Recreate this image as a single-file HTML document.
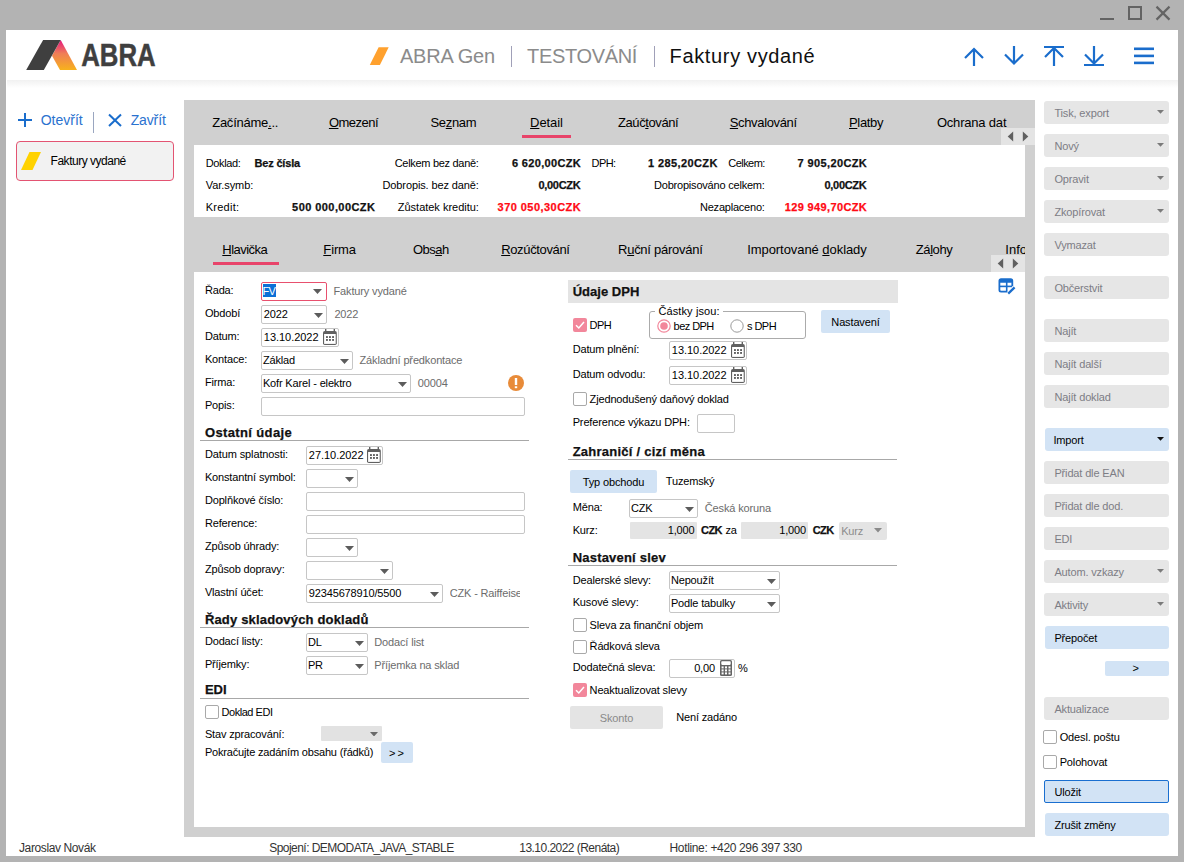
<!DOCTYPE html>
<html><head><meta charset="utf-8"><title>ABRA Gen - Faktury vydané</title>
<style>
html,body{margin:0;padding:0;}
body{width:1184px;height:862px;position:relative;overflow:hidden;background:#b3b3b3;font-family:"Liberation Sans",sans-serif;}
.b{position:absolute;box-sizing:border-box;}
.t{position:absolute;white-space:nowrap;}
u{text-decoration:underline;text-underline-offset:1px;}
</style></head><body>
<div class="b" style="left:6px;top:30px;width:1172px;height:826px;background:#ffffff;"></div>
<svg class="b" style="left:1096px;top:2px" width="80" height="22" viewBox="0 0 80 22"><g stroke="#636363" stroke-width="2" fill="none"><line x1="4" y1="17" x2="18" y2="17"/><rect x="33" y="5" width="12" height="12"/><line x1="60.5" y1="4.6" x2="73.5" y2="17.6" stroke-width="2.2"/><line x1="73.5" y1="4.6" x2="60.5" y2="17.6" stroke-width="2.2"/></g></svg>
<div class="b" style="left:7px;top:80px;width:1171px;height:8px;background:linear-gradient(#f1f1f1,#ffffff);"></div>
<svg class="b" style="left:20px;top:36px" width="140" height="40" viewBox="0 0 140 40"><defs><linearGradient id="lg" x1="0" y1="0" x2="0" y2="1"><stop offset="0" stop-color="#e6177f"/><stop offset="0.45" stop-color="#ef7d57"/><stop offset="1" stop-color="#f7b21c"/></linearGradient></defs><polygon points="40.7,4 57,34 40,34 32,19.7" fill="url(#lg)"/><polygon points="6.2,34 23.1,4 40.7,4 23.8,34" fill="#3f3f3f"/><text x="61.2" y="29.8" font-family="Liberation Sans" font-weight="bold" font-size="31.5" fill="#3f3f3f" stroke="#3f3f3f" stroke-width="0.5" textLength="74.5" lengthAdjust="spacingAndGlyphs">ABRA</text></svg>
<svg class="b" style="left:368px;top:46px" width="22" height="20" viewBox="0 0 22 20"><polygon points="1.8,19 10.6,1.2 20.7,1.2 11.9,19" fill="#ffa12e"/></svg>
<div class="t" style="left:400.00px;top:46.00px;font-size:20px;line-height:20px;color:#8b8b8b;letter-spacing:-0.243px;">ABRA Gen</div>
<div class="b" style="left:511px;top:46px;width:1px;height:21px;background:#a0a0b8;"></div>
<div class="t" style="left:527.00px;top:46.00px;font-size:20px;line-height:20px;color:#8b8b8b;letter-spacing:-0.329px;">TESTOVÁNÍ</div>
<div class="b" style="left:654px;top:46px;width:1px;height:21px;background:#a0a0b8;"></div>
<div class="t" style="left:669.60px;top:46.00px;font-size:20px;line-height:20px;color:#101010;letter-spacing:0.646px;">Faktury vydané</div>
<svg class="b" style="left:960px;top:42px" width="200" height="28" viewBox="0 0 200 28"><g stroke="#1a6dcc" stroke-width="2.2" fill="none" stroke-linecap="butt"><path d="M14,24 V7.5 M5,16 L14,7 L23,16"/><path d="M54,4 V21.5 M45,12.5 L54,21.5 L63,12.5"/><path d="M84,5 H104 M94,24 V6.5 M85,15 L94,6 L103,15"/><path d="M124,23 H144 M134,4 V21.5 M125,12.5 L134,21.5 L143,12.5"/></g><g fill="#1a6dcc"><rect x="174" y="5.5" width="20" height="2.6"/><rect x="174" y="12.6" width="20" height="2.6"/><rect x="174" y="19.6" width="20" height="2.6"/></g></svg>
<svg class="b" style="left:16px;top:111px" width="18" height="18" viewBox="0 0 18 18"><g stroke="#1a6dcc" stroke-width="2"><line x1="9" y1="2" x2="9" y2="16"/><line x1="2" y1="9" x2="16" y2="9"/></g></svg>
<div class="t" style="left:40.70px;top:113.00px;font-size:14px;line-height:14px;color:#2a72cf;">Otevřít</div>
<div class="b" style="left:93px;top:112px;width:1px;height:21px;background:#9aa6c0;"></div>
<svg class="b" style="left:106px;top:112px" width="18" height="18" viewBox="0 0 18 18"><g stroke="#1a6dcc" stroke-width="2"><line x1="3" y1="2.5" x2="15" y2="14"/><line x1="15" y1="2.5" x2="3" y2="14"/></g></svg>
<div class="t" style="left:130.70px;top:113.00px;font-size:14px;line-height:14px;color:#2a72cf;letter-spacing:-0.138px;">Zavřít</div>
<div class="b" style="left:16px;top:141px;width:158px;height:40px;background:#f2f2f2;border:1px solid #e35472;border-radius:4px;"></div>
<svg class="b" style="left:20px;top:151px" width="22" height="20" viewBox="0 0 22 20"><polygon points="1,19 9.5,1 21,1 12.5,19" fill="#ffd200"/></svg>
<div class="t" style="left:50.60px;top:155.00px;font-size:12px;line-height:12px;color:#000000;letter-spacing:-0.489px;">Faktury vydané</div>
<div class="b" style="left:184px;top:100px;width:851px;height:737px;background:#d0d0d0;"></div>
<div class="b" style="left:194px;top:145px;width:831px;height:72px;background:#ffffff;"></div>
<div class="b" style="left:194px;top:272px;width:831px;height:555px;background:#ffffff;"></div>
<div class="t" style="left:212.20px;top:116.00px;font-size:13px;line-height:13px;color:#000000;letter-spacing:-0.243px;">Začínáme<u>.</u>..</div>
<div class="t" style="left:328.90px;top:116.00px;font-size:13px;line-height:13px;color:#000000;letter-spacing:-0.522px;"><u>O</u>mezení</div>
<div class="t" style="left:430.50px;top:116.00px;font-size:13px;line-height:13px;color:#000000;letter-spacing:-0.332px;">Se<u>z</u>nam</div>
<div class="t" style="left:530.10px;top:116.00px;font-size:13px;line-height:13px;color:#000000;letter-spacing:-0.090px;"><u>D</u>etail</div>
<div class="b" style="left:522px;top:135px;width:49px;height:3px;background:#e8446a;"></div>
<div class="t" style="left:618.00px;top:116.00px;font-size:13px;line-height:13px;color:#000000;letter-spacing:-0.411px;">Zaúč<u>t</u>ování</div>
<div class="t" style="left:729.80px;top:116.00px;font-size:13px;line-height:13px;color:#000000;letter-spacing:-0.361px;"><u>S</u>chvalování</div>
<div class="t" style="left:849.00px;top:116.00px;font-size:13px;line-height:13px;color:#000000;letter-spacing:-0.326px;"><u>P</u>latby</div>
<div class="t" style="left:936.90px;top:116.00px;font-size:13px;line-height:13px;color:#000000;letter-spacing:-0.193px;">Ochrana dat</div>
<div class="b" style="left:1001px;top:128px;width:34px;height:17px;background:#e4e4e4;"></div>
<svg class="b" style="left:1001px;top:128px" width="34" height="17" viewBox="0 0 34 17"><g fill="#606060"><polygon points="6.7,8.5 12.2,3.5 12.2,13.5"/><polygon points="27.3,8.5 21.8,3.5 21.8,13.5"/></g></svg>
<div class="t" style="left:205.70px;top:158.00px;font-size:11px;line-height:11px;color:#000000;letter-spacing:-0.373px;">Doklad:</div>
<div class="t" style="left:254.60px;top:158.00px;font-size:11px;line-height:11px;color:#111;font-weight:bold;-webkit-text-stroke:0.25px #111;letter-spacing:-0.196px;">Bez čísla</div>
<div class="t" style="left:394.70px;top:158.00px;font-size:11px;line-height:11px;color:#000000;letter-spacing:-0.300px;">Celkem bez daně:</div>
<div class="t" style="left:512.00px;top:158.00px;font-size:11px;line-height:11px;color:#111;font-weight:bold;-webkit-text-stroke:0.25px #111;letter-spacing:0.322px;">6 620,00CZK</div>
<div class="t" style="left:591.50px;top:158.00px;font-size:11px;line-height:11px;color:#000000;letter-spacing:-0.550px;">DPH:</div>
<div class="t" style="left:647.90px;top:158.00px;font-size:11px;line-height:11px;color:#111;font-weight:bold;-webkit-text-stroke:0.25px #111;letter-spacing:0.412px;">1 285,20CZK</div>
<div class="t" style="left:728.30px;top:158.00px;font-size:11px;line-height:11px;color:#000000;letter-spacing:-0.550px;">Celkem:</div>
<div class="t" style="left:797.60px;top:158.00px;font-size:11px;line-height:11px;color:#111;font-weight:bold;-webkit-text-stroke:0.25px #111;letter-spacing:0.372px;">7 905,20CZK</div>
<div class="t" style="left:205.70px;top:180.00px;font-size:11px;line-height:11px;color:#000000;letter-spacing:-0.054px;">Var.symb:</div>
<div class="t" style="left:382.50px;top:180.00px;font-size:11px;line-height:11px;color:#000000;letter-spacing:-0.116px;">Dobropis. bez daně:</div>
<div class="t" style="left:538.43px;top:180.00px;font-size:11px;line-height:11px;color:#111;font-weight:bold;-webkit-text-stroke:0.25px #111;letter-spacing:-0.300px;">0,00CZK</div>
<div class="t" style="left:654.00px;top:180.00px;font-size:11px;line-height:11px;color:#000000;letter-spacing:-0.205px;">Dobropisováno celkem:</div>
<div class="t" style="left:824.53px;top:180.00px;font-size:11px;line-height:11px;color:#111;font-weight:bold;-webkit-text-stroke:0.25px #111;letter-spacing:-0.300px;">0,00CZK</div>
<div class="t" style="left:205.70px;top:202.00px;font-size:11px;line-height:11px;color:#000000;letter-spacing:0.261px;">Kredit:</div>
<div class="t" style="left:292.10px;top:202.00px;font-size:11px;line-height:11px;color:#111;font-weight:bold;-webkit-text-stroke:0.25px #111;letter-spacing:0.432px;">500 000,00CZK</div>
<div class="t" style="left:397.80px;top:202.00px;font-size:11px;line-height:11px;color:#000000;letter-spacing:-0.016px;">Zůstatek kreditu:</div>
<div class="t" style="left:497.60px;top:202.00px;font-size:11px;line-height:11px;color:#ff0a14;font-weight:bold;-webkit-text-stroke:0.25px #ff0a14;letter-spacing:0.449px;">370 050,30CZK</div>
<div class="t" style="left:700.00px;top:202.00px;font-size:11px;line-height:11px;color:#000000;letter-spacing:-0.219px;">Nezaplaceno:</div>
<div class="t" style="left:784.70px;top:202.00px;font-size:11px;line-height:11px;color:#ff0a14;font-weight:bold;-webkit-text-stroke:0.25px #ff0a14;letter-spacing:0.365px;">129 949,70CZK</div>
<div class="t" style="left:222.30px;top:243.00px;font-size:13px;line-height:13px;color:#000000;letter-spacing:-0.514px;"><u>H</u>lavička</div>
<div class="b" style="left:213px;top:262px;width:66px;height:3px;background:#e8446a;"></div>
<div class="t" style="left:323.30px;top:243.00px;font-size:13px;line-height:13px;color:#000000;letter-spacing:-0.122px;"><u>F</u>irma</div>
<div class="t" style="left:413.00px;top:243.00px;font-size:13px;line-height:13px;color:#000000;letter-spacing:-0.550px;">Obs<u>a</u>h</div>
<div class="t" style="left:501.20px;top:243.00px;font-size:13px;line-height:13px;color:#000000;letter-spacing:-0.355px;"><u>R</u>ozúčtování</div>
<div class="t" style="left:618.00px;top:243.00px;font-size:13px;line-height:13px;color:#000000;letter-spacing:-0.258px;">R<u>u</u>ční párování</div>
<div class="t" style="left:747.20px;top:243.00px;font-size:13px;line-height:13px;color:#000000;letter-spacing:-0.060px;">Importované <u>d</u>oklady</div>
<div class="t" style="left:915.80px;top:243.00px;font-size:13px;line-height:13px;color:#000000;letter-spacing:-0.424px;">Zá<u>l</u>ohy</div>
<div class="t" style="left:1005.30px;top:243.00px;font-size:13px;line-height:13px;color:#000000;width:19.70px;overflow:hidden;">Info</div>
<div class="b" style="left:991px;top:255px;width:34px;height:17px;background:#e4e4e4;"></div>
<svg class="b" style="left:991px;top:255px" width="34" height="17" viewBox="0 0 34 17"><g fill="#606060"><polygon points="6.7,8.5 12.2,3.5 12.2,13.5"/><polygon points="27.3,8.5 21.8,3.5 21.8,13.5"/></g></svg>
<div class="t" style="left:204.90px;top:285.00px;font-size:11px;line-height:11px;color:#000000;letter-spacing:-0.150px;">Řada:</div>
<div class="b" style="left:261px;top:282px;width:66px;height:19px;background:#fff;border:1px solid #e8506e;border-radius:2px;"></div>
<div class="b" style="left:263px;top:284px;width:13px;height:13px;background:#0c6fd6;"></div>
<div class="t" style="left:262.60px;top:286.00px;font-size:11px;line-height:11px;color:#ffffff;letter-spacing:-0.900px;">FV</div>
<svg class="b" style="left:313.3px;top:289.3px" width="9" height="5" viewBox="0 0 9 5"><polygon points="0,0 9,0 4.5,5" fill="#5c5c5c"/></svg>
<div class="t" style="left:333.50px;top:286.00px;font-size:11px;line-height:11px;color:#6c6c6c;letter-spacing:-0.150px;">Faktury vydané</div>
<div class="t" style="left:204.90px;top:308.00px;font-size:11px;line-height:11px;color:#000000;letter-spacing:-0.150px;">Období</div>
<div class="b" style="left:261px;top:305px;width:66px;height:19px;background:#fff;border:1px solid #c6c6c6;border-radius:2px;"></div>
<div class="t" style="left:263.80px;top:309.00px;font-size:11px;line-height:11px;color:#000000;letter-spacing:-0.150px;">2022</div>
<svg class="b" style="left:313.5px;top:312.6px" width="9" height="5" viewBox="0 0 9 5"><polygon points="0,0 9,0 4.5,5" fill="#5c5c5c"/></svg>
<div class="t" style="left:334.40px;top:309.00px;font-size:11px;line-height:11px;color:#6c6c6c;letter-spacing:-0.150px;">2022</div>
<div class="t" style="left:204.90px;top:331.00px;font-size:11px;line-height:11px;color:#000000;letter-spacing:-0.150px;">Datum:</div>
<div class="b" style="left:261px;top:328px;width:78px;height:19px;background:#fff;border:1px solid #c6c6c6;border-radius:2px;"></div>
<div class="t" style="left:263.80px;top:332.00px;font-size:11px;line-height:11px;color:#000000;letter-spacing:-0.037px;">13.10.2022</div>
<svg class="b" style="left:322.8px;top:329px" width="14" height="16" viewBox="0 0 14 16"><g fill="#606060"><rect x="0" y="2" width="13.8" height="14" rx="1.8"/><rect x="2" y="0" width="1.4" height="3"/><rect x="10.6" y="0" width="1.4" height="3"/></g><rect x="1.1" y="5" width="11.6" height="9.9" fill="#fff"/><g fill="#606060"><rect x="3" y="7.1" width="1.9" height="1.9"/><rect x="6" y="7.1" width="1.9" height="1.9"/><rect x="9.1" y="7.1" width="1.9" height="1.9"/><rect x="3" y="10" width="1.9" height="1.9"/><rect x="6" y="10" width="1.9" height="1.9"/><rect x="9.1" y="10" width="1.9" height="1.9"/></g></svg>
<div class="t" style="left:204.90px;top:354.00px;font-size:11px;line-height:11px;color:#000000;letter-spacing:-0.150px;">Kontace:</div>
<div class="b" style="left:261px;top:351px;width:92px;height:19px;background:#fff;border:1px solid #c6c6c6;border-radius:2px;"></div>
<div class="t" style="left:262.90px;top:355.00px;font-size:11px;line-height:11px;color:#000000;letter-spacing:-0.150px;">Základ</div>
<svg class="b" style="left:339.5px;top:358.6px" width="9" height="5" viewBox="0 0 9 5"><polygon points="0,0 9,0 4.5,5" fill="#5c5c5c"/></svg>
<div class="t" style="left:359.50px;top:355.00px;font-size:11px;line-height:11px;color:#6c6c6c;letter-spacing:-0.150px;">Základní předkontace</div>
<div class="t" style="left:204.90px;top:377.00px;font-size:11px;line-height:11px;color:#000000;letter-spacing:-0.150px;">Firma:</div>
<div class="b" style="left:261px;top:374px;width:150px;height:19px;background:#fff;border:1px solid #c6c6c6;border-radius:2px;"></div>
<div class="t" style="left:262.90px;top:378.00px;font-size:11px;line-height:11px;color:#000000;letter-spacing:-0.150px;">Kofr Karel - elektro</div>
<svg class="b" style="left:397.5px;top:381.6px" width="9" height="5" viewBox="0 0 9 5"><polygon points="0,0 9,0 4.5,5" fill="#5c5c5c"/></svg>
<div class="t" style="left:417.80px;top:378.00px;font-size:11px;line-height:11px;color:#6c6c6c;letter-spacing:-0.150px;">00004</div>
<svg class="b" style="left:508px;top:375px" width="16" height="16" viewBox="0 0 16 16"><circle cx="8" cy="8" r="8" fill="#e88b39"/><rect x="6.8" y="3" width="2.4" height="7" fill="#fff"/><rect x="6.8" y="11.3" width="2.4" height="1.9" fill="#fff"/></svg>
<div class="t" style="left:204.90px;top:400.00px;font-size:11px;line-height:11px;color:#000000;letter-spacing:-0.150px;">Popis:</div>
<div class="b" style="left:261px;top:397px;width:264px;height:19px;background:#fff;border:1px solid #c6c6c6;border-radius:2px;"></div>
<div class="t" style="left:204.90px;top:426.00px;font-size:13px;line-height:13px;color:#111111;font-weight:bold;-webkit-text-stroke:0.25px #111111;letter-spacing:0.373px;">Ostatní údaje</div>
<div class="b" style="left:200px;top:440px;width:329px;height:1px;background:#a8a8a8;"></div>
<div class="t" style="left:204.90px;top:449.00px;font-size:11px;line-height:11px;color:#000000;letter-spacing:-0.114px;">Datum splatnosti:</div>
<div class="b" style="left:306px;top:446px;width:77px;height:19px;background:#fff;border:1px solid #c6c6c6;border-radius:2px;"></div>
<div class="t" style="left:308.80px;top:450.00px;font-size:11px;line-height:11px;color:#000000;letter-spacing:-0.037px;">27.10.2022</div>
<svg class="b" style="left:366.8px;top:447px" width="14" height="16" viewBox="0 0 14 16"><g fill="#606060"><rect x="0" y="2" width="13.8" height="14" rx="1.8"/><rect x="2" y="0" width="1.4" height="3"/><rect x="10.6" y="0" width="1.4" height="3"/></g><rect x="1.1" y="5" width="11.6" height="9.9" fill="#fff"/><g fill="#606060"><rect x="3" y="7.1" width="1.9" height="1.9"/><rect x="6" y="7.1" width="1.9" height="1.9"/><rect x="9.1" y="7.1" width="1.9" height="1.9"/><rect x="3" y="10" width="1.9" height="1.9"/><rect x="6" y="10" width="1.9" height="1.9"/><rect x="9.1" y="10" width="1.9" height="1.9"/></g></svg>
<div class="t" style="left:204.90px;top:472.00px;font-size:11px;line-height:11px;color:#000000;letter-spacing:-0.150px;">Konstantní symbol:</div>
<div class="b" style="left:306px;top:469px;width:52px;height:19px;background:#fff;border:1px solid #c6c6c6;border-radius:2px;"></div>
<svg class="b" style="left:344.5px;top:476.6px" width="9" height="5" viewBox="0 0 9 5"><polygon points="0,0 9,0 4.5,5" fill="#5c5c5c"/></svg>
<div class="t" style="left:204.90px;top:495.00px;font-size:11px;line-height:11px;color:#000000;letter-spacing:-0.150px;">Doplňkové číslo:</div>
<div class="b" style="left:306px;top:492px;width:219px;height:19px;background:#fff;border:1px solid #c6c6c6;border-radius:2px;"></div>
<div class="t" style="left:204.90px;top:518.00px;font-size:11px;line-height:11px;color:#000000;letter-spacing:-0.150px;">Reference:</div>
<div class="b" style="left:306px;top:515px;width:219px;height:19px;background:#fff;border:1px solid #c6c6c6;border-radius:2px;"></div>
<div class="t" style="left:204.90px;top:541.00px;font-size:11px;line-height:11px;color:#000000;letter-spacing:-0.150px;">Způsob úhrady:</div>
<div class="b" style="left:306px;top:538px;width:52px;height:19px;background:#fff;border:1px solid #c6c6c6;border-radius:2px;"></div>
<svg class="b" style="left:344.5px;top:545.6px" width="9" height="5" viewBox="0 0 9 5"><polygon points="0,0 9,0 4.5,5" fill="#5c5c5c"/></svg>
<div class="t" style="left:204.90px;top:564.00px;font-size:11px;line-height:11px;color:#000000;letter-spacing:-0.150px;">Způsob dopravy:</div>
<div class="b" style="left:306px;top:561px;width:87px;height:19px;background:#fff;border:1px solid #c6c6c6;border-radius:2px;"></div>
<svg class="b" style="left:379.5px;top:568.6px" width="9" height="5" viewBox="0 0 9 5"><polygon points="0,0 9,0 4.5,5" fill="#5c5c5c"/></svg>
<div class="t" style="left:204.90px;top:587.00px;font-size:11px;line-height:11px;color:#000000;letter-spacing:-0.150px;">Vlastní účet:</div>
<div class="b" style="left:306px;top:584px;width:137px;height:19px;background:#fff;border:1px solid #c6c6c6;border-radius:2px;"></div>
<div class="t" style="left:308.80px;top:588.00px;font-size:11px;line-height:11px;color:#000000;letter-spacing:-0.150px;">92345678910/5500</div>
<svg class="b" style="left:429.5px;top:591.6px" width="9" height="5" viewBox="0 0 9 5"><polygon points="0,0 9,0 4.5,5" fill="#5c5c5c"/></svg>
<div class="t" style="left:449.70px;top:588.00px;font-size:11px;line-height:11px;color:#6c6c6c;letter-spacing:-0.150px;width:70.30px;overflow:hidden;">CZK - Raiffeise</div>
<div class="t" style="left:204.90px;top:613.00px;font-size:13px;line-height:13px;color:#111111;font-weight:bold;-webkit-text-stroke:0.25px #111111;letter-spacing:0.172px;">Řady skladových dokladů</div>
<div class="b" style="left:200px;top:627px;width:329px;height:1px;background:#a8a8a8;"></div>
<div class="t" style="left:204.90px;top:636.00px;font-size:11px;line-height:11px;color:#000000;letter-spacing:-0.150px;">Dodací listy:</div>
<div class="b" style="left:306px;top:633px;width:62px;height:19px;background:#fff;border:1px solid #c6c6c6;border-radius:2px;"></div>
<div class="t" style="left:307.90px;top:637.00px;font-size:11px;line-height:11px;color:#000000;letter-spacing:-0.150px;">DL</div>
<svg class="b" style="left:354.5px;top:640.6px" width="9" height="5" viewBox="0 0 9 5"><polygon points="0,0 9,0 4.5,5" fill="#5c5c5c"/></svg>
<div class="t" style="left:374.30px;top:637.00px;font-size:11px;line-height:11px;color:#6c6c6c;letter-spacing:-0.150px;">Dodací list</div>
<div class="t" style="left:204.90px;top:659.00px;font-size:11px;line-height:11px;color:#000000;letter-spacing:-0.150px;">Příjemky:</div>
<div class="b" style="left:306px;top:656px;width:62px;height:19px;background:#fff;border:1px solid #c6c6c6;border-radius:2px;"></div>
<div class="t" style="left:307.90px;top:660.00px;font-size:11px;line-height:11px;color:#000000;letter-spacing:-0.150px;">PR</div>
<svg class="b" style="left:354.5px;top:663.6px" width="9" height="5" viewBox="0 0 9 5"><polygon points="0,0 9,0 4.5,5" fill="#5c5c5c"/></svg>
<div class="t" style="left:374.30px;top:660.00px;font-size:11px;line-height:11px;color:#6c6c6c;letter-spacing:-0.150px;">Příjemka na sklad</div>
<div class="t" style="left:204.90px;top:683.00px;font-size:13px;line-height:13px;color:#111111;font-weight:bold;-webkit-text-stroke:0.25px #111111;letter-spacing:-0.030px;">EDI</div>
<div class="b" style="left:200px;top:698px;width:329px;height:1px;background:#a8a8a8;"></div>
<div class="b" style="left:205px;top:705px;width:14px;height:14px;background:#fff;border:1px solid #a9a9a9;border-radius:2px;"></div>
<div class="t" style="left:221.50px;top:707.00px;font-size:11px;line-height:11px;color:#000000;letter-spacing:-0.464px;">Doklad EDI</div>
<div class="t" style="left:204.90px;top:729.00px;font-size:11px;line-height:11px;color:#000000;letter-spacing:-0.150px;">Stav zpracování:</div>
<div class="b" style="left:321px;top:725.6px;width:61px;height:15px;background:#e2e2e2;border-radius:1px;"></div>
<svg class="b" style="left:369.5px;top:731.75px" width="8" height="4.5" viewBox="0 0 8 4.5"><polygon points="0,0 8,0 4.0,4.5" fill="#6a6a6a"/></svg>
<div class="t" style="left:204.90px;top:747.00px;font-size:11px;line-height:11px;color:#000000;letter-spacing:-0.178px;">Pokračujte zadáním obsahu (řádků)</div>
<div class="b" style="left:381px;top:742px;width:32px;height:21px;background:#d2e3f5;border-radius:2px;"></div>
<div class="t" style="left:389.00px;top:748.00px;font-size:11px;line-height:11px;color:#000000;letter-spacing:2.176px;">&gt;&gt;</div>
<div class="b" style="left:568px;top:280px;width:330px;height:23px;background:#e4e4e4;"></div>
<div class="t" style="left:572.70px;top:285.00px;font-size:13px;line-height:13px;color:#111;font-weight:bold;-webkit-text-stroke:0.25px #111;letter-spacing:0.016px;">Údaje DPH</div>
<div class="b" style="left:573px;top:318px;width:14px;height:14px;background:#f2879b;border-radius:2px;"></div>
<svg class="b" style="left:573px;top:318px" width="14" height="14" viewBox="0 0 14 14"><path d="M3,7.2 L5.8,10 L11,4" stroke="#fff" stroke-width="1.5" fill="none"/></svg>
<div class="t" style="left:589.60px;top:320.00px;font-size:11px;line-height:11px;color:#000000;letter-spacing:-0.550px;">DPH</div>
<div class="b" style="left:649.4px;top:311.2px;width:156.4px;height:27.4px;border:1px solid #ababab;border-radius:3px;"></div>
<div class="b" style="left:655px;top:306px;width:68px;height:8px;background:#fff;"></div>
<div class="t" style="left:658.40px;top:306.00px;font-size:11px;line-height:11px;color:#000000;letter-spacing:0.122px;">Částky jsou:</div>
<svg class="b" style="left:656.5px;top:319px" width="14" height="14" viewBox="0 0 14 14"><circle cx="7" cy="7" r="6.2" fill="#fff" stroke="#f2879b" stroke-width="1.2"/><circle cx="7" cy="7" r="3.8" fill="#f2879b"/></svg>
<div class="t" style="left:673.60px;top:321.00px;font-size:11px;line-height:11px;color:#000000;letter-spacing:-0.550px;">bez DPH</div>
<svg class="b" style="left:729.5px;top:319px" width="14" height="14" viewBox="0 0 14 14"><circle cx="7" cy="7" r="6.2" fill="#fff" stroke="#9a9a9a" stroke-width="1"/></svg>
<div class="t" style="left:747.00px;top:321.00px;font-size:11px;line-height:11px;color:#000000;letter-spacing:-0.550px;">s DPH</div>
<div class="b" style="left:821px;top:310px;width:69px;height:23px;background:#d2e3f5;border-radius:2px;"></div>
<div class="t" style="left:831.36px;top:317.00px;font-size:11px;line-height:11px;color:#000000;letter-spacing:-0.150px;">Nastavení</div>
<div class="t" style="left:572.70px;top:344.00px;font-size:11px;line-height:11px;color:#000000;letter-spacing:-0.150px;">Datum plnění:</div>
<div class="b" style="left:669px;top:341px;width:78px;height:19px;background:#fff;border:1px solid #c6c6c6;border-radius:2px;"></div>
<div class="t" style="left:671.80px;top:345.00px;font-size:11px;line-height:11px;color:#000000;letter-spacing:-0.037px;">13.10.2022</div>
<svg class="b" style="left:730.8px;top:342px" width="14" height="16" viewBox="0 0 14 16"><g fill="#606060"><rect x="0" y="2" width="13.8" height="14" rx="1.8"/><rect x="2" y="0" width="1.4" height="3"/><rect x="10.6" y="0" width="1.4" height="3"/></g><rect x="1.1" y="5" width="11.6" height="9.9" fill="#fff"/><g fill="#606060"><rect x="3" y="7.1" width="1.9" height="1.9"/><rect x="6" y="7.1" width="1.9" height="1.9"/><rect x="9.1" y="7.1" width="1.9" height="1.9"/><rect x="3" y="10" width="1.9" height="1.9"/><rect x="6" y="10" width="1.9" height="1.9"/><rect x="9.1" y="10" width="1.9" height="1.9"/></g></svg>
<div class="t" style="left:572.70px;top:369.00px;font-size:11px;line-height:11px;color:#000000;letter-spacing:-0.150px;">Datum odvodu:</div>
<div class="b" style="left:669px;top:366px;width:78px;height:19px;background:#fff;border:1px solid #c6c6c6;border-radius:2px;"></div>
<div class="t" style="left:671.80px;top:370.00px;font-size:11px;line-height:11px;color:#000000;letter-spacing:-0.037px;">13.10.2022</div>
<svg class="b" style="left:730.8px;top:367px" width="14" height="16" viewBox="0 0 14 16"><g fill="#606060"><rect x="0" y="2" width="13.8" height="14" rx="1.8"/><rect x="2" y="0" width="1.4" height="3"/><rect x="10.6" y="0" width="1.4" height="3"/></g><rect x="1.1" y="5" width="11.6" height="9.9" fill="#fff"/><g fill="#606060"><rect x="3" y="7.1" width="1.9" height="1.9"/><rect x="6" y="7.1" width="1.9" height="1.9"/><rect x="9.1" y="7.1" width="1.9" height="1.9"/><rect x="3" y="10" width="1.9" height="1.9"/><rect x="6" y="10" width="1.9" height="1.9"/><rect x="9.1" y="10" width="1.9" height="1.9"/></g></svg>
<div class="b" style="left:573px;top:392.4px;width:14px;height:14px;background:#fff;border:1px solid #a9a9a9;border-radius:2px;"></div>
<div class="t" style="left:589.60px;top:394.00px;font-size:11px;line-height:11px;color:#000000;letter-spacing:-0.150px;">Zjednodušený daňový doklad</div>
<div class="t" style="left:572.70px;top:417.00px;font-size:11px;line-height:11px;color:#000000;letter-spacing:-0.150px;">Preference výkazu DPH:</div>
<div class="b" style="left:697px;top:414px;width:38px;height:19px;background:#fff;border:1px solid #c6c6c6;border-radius:2px;"></div>
<div class="t" style="left:572.70px;top:445.00px;font-size:13px;line-height:13px;color:#111111;font-weight:bold;-webkit-text-stroke:0.25px #111111;letter-spacing:0.239px;">Zahraničí / cizí měna</div>
<div class="b" style="left:568px;top:459px;width:329px;height:1px;background:#a8a8a8;"></div>
<div class="b" style="left:570.3px;top:470px;width:86.4px;height:22.6px;background:#d2e3f5;border-radius:2px;"></div>
<div class="t" style="left:582.81px;top:477.00px;font-size:11px;line-height:11px;color:#000000;letter-spacing:-0.150px;">Typ obchodu</div>
<div class="t" style="left:665.80px;top:476.00px;font-size:11px;line-height:11px;color:#000000;letter-spacing:-0.150px;">Tuzemský</div>
<div class="t" style="left:572.70px;top:502.00px;font-size:11px;line-height:11px;color:#000000;letter-spacing:-0.150px;">Měna:</div>
<div class="b" style="left:629px;top:499px;width:69px;height:19px;background:#fff;border:1px solid #c6c6c6;border-radius:2px;"></div>
<div class="t" style="left:630.90px;top:503.00px;font-size:11px;line-height:11px;color:#000000;letter-spacing:-0.150px;">CZK</div>
<svg class="b" style="left:684.5px;top:506.6px" width="9" height="5" viewBox="0 0 9 5"><polygon points="0,0 9,0 4.5,5" fill="#5c5c5c"/></svg>
<div class="t" style="left:704.80px;top:503.00px;font-size:11px;line-height:11px;color:#6c6c6c;letter-spacing:-0.150px;">Česká koruna</div>
<div class="t" style="left:572.70px;top:525.00px;font-size:11px;line-height:11px;color:#000000;letter-spacing:-0.150px;">Kurz:</div>
<div class="b" style="left:629.5px;top:521.5px;width:67px;height:17.6px;background:#e4e4e4;border-radius:1px;"></div>
<div class="t" style="left:667.69px;top:525.00px;font-size:11px;line-height:11px;color:#000000;letter-spacing:-0.150px;">1,000</div>
<div class="t" style="left:701.00px;top:525.00px;font-size:11px;line-height:11px;color:#111;font-weight:bold;-webkit-text-stroke:0.25px #111;letter-spacing:-0.550px;">CZK</div>
<div class="t" style="left:725.50px;top:525.00px;font-size:11px;line-height:11px;color:#000000;letter-spacing:-0.150px;">za</div>
<div class="b" style="left:741.3px;top:521.5px;width:67px;height:17.6px;background:#e4e4e4;border-radius:1px;"></div>
<div class="t" style="left:779.19px;top:525.00px;font-size:11px;line-height:11px;color:#000000;letter-spacing:-0.150px;">1,000</div>
<div class="t" style="left:812.70px;top:525.00px;font-size:11px;line-height:11px;color:#111;font-weight:bold;-webkit-text-stroke:0.25px #111;letter-spacing:-0.550px;">CZK</div>
<div class="b" style="left:838.7px;top:521.5px;width:48px;height:18px;background:#e4e4e4;border-radius:2px;"></div>
<div class="t" style="left:841.20px;top:526.00px;font-size:11px;line-height:11px;color:#8c8c8c;letter-spacing:-0.150px;">Kurz</div>
<svg class="b" style="left:873.5px;top:528.25px" width="8" height="4.5" viewBox="0 0 8 4.5"><polygon points="0,0 8,0 4.0,4.5" fill="#8a8a8a"/></svg>
<div class="t" style="left:572.70px;top:551.00px;font-size:13px;line-height:13px;color:#111111;font-weight:bold;-webkit-text-stroke:0.25px #111111;letter-spacing:0.200px;">Nastavení slev</div>
<div class="b" style="left:568px;top:565px;width:329px;height:1px;background:#a8a8a8;"></div>
<div class="t" style="left:572.70px;top:575.00px;font-size:11px;line-height:11px;color:#000000;letter-spacing:-0.150px;">Dealerské slevy:</div>
<div class="b" style="left:669px;top:571px;width:111px;height:19px;background:#fff;border:1px solid #c6c6c6;border-radius:2px;"></div>
<div class="t" style="left:670.90px;top:575.00px;font-size:11px;line-height:11px;color:#000000;letter-spacing:-0.150px;">Nepoužít</div>
<svg class="b" style="left:766.5px;top:578.6px" width="9" height="5" viewBox="0 0 9 5"><polygon points="0,0 9,0 4.5,5" fill="#5c5c5c"/></svg>
<div class="t" style="left:572.70px;top:597.00px;font-size:11px;line-height:11px;color:#000000;letter-spacing:-0.150px;">Kusové slevy:</div>
<div class="b" style="left:669px;top:594px;width:111px;height:19px;background:#fff;border:1px solid #c6c6c6;border-radius:2px;"></div>
<div class="t" style="left:670.90px;top:598.00px;font-size:11px;line-height:11px;color:#000000;letter-spacing:-0.150px;">Podle tabulky</div>
<svg class="b" style="left:766.5px;top:601.6px" width="9" height="5" viewBox="0 0 9 5"><polygon points="0,0 9,0 4.5,5" fill="#5c5c5c"/></svg>
<div class="b" style="left:573px;top:618px;width:14px;height:14px;background:#fff;border:1px solid #a9a9a9;border-radius:2px;"></div>
<div class="t" style="left:589.60px;top:620.00px;font-size:11px;line-height:11px;color:#000000;letter-spacing:-0.150px;">Sleva za finanční objem</div>
<div class="b" style="left:573px;top:639.5px;width:14px;height:14px;background:#fff;border:1px solid #a9a9a9;border-radius:2px;"></div>
<div class="t" style="left:589.60px;top:641.00px;font-size:11px;line-height:11px;color:#000000;letter-spacing:-0.150px;">Řádková sleva</div>
<div class="t" style="left:572.70px;top:662.00px;font-size:11px;line-height:11px;color:#000000;letter-spacing:-0.150px;">Dodatečná sleva:</div>
<div class="b" style="left:669px;top:659px;width:66px;height:19px;background:#fff;border:1px solid #c6c6c6;border-radius:2px;"></div>
<div class="t" style="left:694.16px;top:663.00px;font-size:11px;line-height:11px;color:#000000;letter-spacing:-0.150px;">0,00</div>
<svg class="b" style="left:720px;top:660px" width="12" height="16" viewBox="0 0 12 16"><rect x="0" y="0" width="12" height="16" rx="1.6" fill="#646464"/><rect x="1.3" y="1.3" width="9.4" height="3.6" rx="0.8" fill="#fff"/><g fill="#fff"><rect x="1.6" y="6.4" width="2" height="2"/><rect x="5" y="6.4" width="2" height="2"/><rect x="8.5" y="6.4" width="2" height="2"/><rect x="1.6" y="9.4" width="2" height="2"/><rect x="5" y="9.4" width="2" height="2"/><rect x="8.5" y="9.4" width="2" height="2"/><rect x="1.6" y="12.4" width="2" height="2"/><rect x="5" y="12.4" width="2" height="2"/><rect x="8.5" y="12.4" width="2" height="2"/></g></svg>
<div class="t" style="left:738.00px;top:663.00px;font-size:11px;line-height:11px;color:#000000;letter-spacing:-0.150px;">%</div>
<div class="b" style="left:573px;top:683.3px;width:14px;height:14px;background:#f2879b;border-radius:2px;"></div>
<svg class="b" style="left:573px;top:683.3px" width="14" height="14" viewBox="0 0 14 14"><path d="M3,7.2 L5.8,10 L11,4" stroke="#fff" stroke-width="1.5" fill="none"/></svg>
<div class="t" style="left:589.60px;top:685.00px;font-size:11px;line-height:11px;color:#000000;letter-spacing:-0.150px;">Neaktualizovat slevy</div>
<div class="b" style="left:570.3px;top:706.3px;width:93.2px;height:22.6px;background:#e4e4e4;border-radius:2px;"></div>
<div class="t" style="left:599.81px;top:713.00px;font-size:11px;line-height:11px;color:#8a8a8a;letter-spacing:-0.150px;">Skonto</div>
<div class="t" style="left:676.20px;top:712.00px;font-size:11px;line-height:11px;color:#000000;letter-spacing:-0.150px;">Není zadáno</div>
<svg class="b" style="left:998px;top:278px" width="18" height="18" viewBox="0 0 18 18"><g fill="none" stroke="#1a6dcc"><path d="M14.3,8.2 V2.8 a1.6,1.6 0 0 0 -1.6,-1.6 H3 a1.6,1.6 0 0 0 -1.6,1.6 V12 a1.6,1.6 0 0 0 1.6,1.6 H9.2" stroke-width="1.8"/><line x1="1.4" y1="8.4" x2="14" y2="8.4" stroke-width="1.6"/><line x1="8.7" y1="4" x2="8.7" y2="13.6" stroke-width="1.6"/></g><rect x="1.2" y="1.1" width="13.2" height="3.7" rx="1.2" fill="#1a6dcc"/><line x1="10.2" y1="15.6" x2="16.6" y2="9.4" stroke="#1a6dcc" stroke-width="2.3"/></svg>
<div class="b" style="left:1044px;top:101px;width:125px;height:22.6px;background:#e6e6e6;border-radius:3px;"></div>
<div class="t" style="left:1054.40px;top:108.00px;font-size:11px;line-height:11px;color:#7d7d85;letter-spacing:-0.150px;">Tisk, export</div>
<svg class="b" style="left:1157.0px;top:110.39999999999999px" width="7" height="3.8" viewBox="0 0 7 3.8"><polygon points="0,0 7,0 3.5,3.8" fill="#7a7a7a"/></svg>
<div class="b" style="left:1044px;top:134px;width:125px;height:22.6px;background:#e6e6e6;border-radius:3px;"></div>
<div class="t" style="left:1054.40px;top:141.00px;font-size:11px;line-height:11px;color:#7d7d85;letter-spacing:-0.150px;">Nový</div>
<svg class="b" style="left:1157.0px;top:143.4px" width="7" height="3.8" viewBox="0 0 7 3.8"><polygon points="0,0 7,0 3.5,3.8" fill="#7a7a7a"/></svg>
<div class="b" style="left:1044px;top:167px;width:125px;height:22.6px;background:#e6e6e6;border-radius:3px;"></div>
<div class="t" style="left:1054.40px;top:174.00px;font-size:11px;line-height:11px;color:#7d7d85;letter-spacing:-0.150px;">Opravit</div>
<svg class="b" style="left:1157.0px;top:176.4px" width="7" height="3.8" viewBox="0 0 7 3.8"><polygon points="0,0 7,0 3.5,3.8" fill="#7a7a7a"/></svg>
<div class="b" style="left:1044px;top:200px;width:125px;height:22.6px;background:#e6e6e6;border-radius:3px;"></div>
<div class="t" style="left:1054.40px;top:207.00px;font-size:11px;line-height:11px;color:#7d7d85;letter-spacing:-0.150px;">Zkopírovat</div>
<svg class="b" style="left:1157.0px;top:209.4px" width="7" height="3.8" viewBox="0 0 7 3.8"><polygon points="0,0 7,0 3.5,3.8" fill="#7a7a7a"/></svg>
<div class="b" style="left:1044px;top:233px;width:125px;height:22.6px;background:#e6e6e6;border-radius:3px;"></div>
<div class="t" style="left:1054.40px;top:240.00px;font-size:11px;line-height:11px;color:#7d7d85;letter-spacing:-0.150px;">Vymazat</div>
<div class="b" style="left:1044px;top:276px;width:125px;height:22.6px;background:#e6e6e6;border-radius:3px;"></div>
<div class="t" style="left:1054.40px;top:283.00px;font-size:11px;line-height:11px;color:#7d7d85;letter-spacing:-0.150px;">Občerstvit</div>
<div class="b" style="left:1044px;top:319.2px;width:125px;height:22.6px;background:#e6e6e6;border-radius:3px;"></div>
<div class="t" style="left:1054.40px;top:326.00px;font-size:11px;line-height:11px;color:#7d7d85;letter-spacing:-0.150px;">Najít</div>
<div class="b" style="left:1044px;top:352.2px;width:125px;height:22.6px;background:#e6e6e6;border-radius:3px;"></div>
<div class="t" style="left:1054.40px;top:359.00px;font-size:11px;line-height:11px;color:#7d7d85;letter-spacing:-0.150px;">Najít další</div>
<div class="b" style="left:1044px;top:385.2px;width:125px;height:22.6px;background:#e6e6e6;border-radius:3px;"></div>
<div class="t" style="left:1054.40px;top:392.00px;font-size:11px;line-height:11px;color:#7d7d85;letter-spacing:-0.150px;">Najít doklad</div>
<div class="b" style="left:1045px;top:428px;width:124px;height:22.6px;background:#d2e3f5;border-radius:3px;"></div>
<div class="t" style="left:1053.40px;top:435.00px;font-size:11px;line-height:11px;color:#000000;letter-spacing:-0.150px;">Import</div>
<svg class="b" style="left:1157.0px;top:437.40000000000003px" width="7" height="3.8" viewBox="0 0 7 3.8"><polygon points="0,0 7,0 3.5,3.8" fill="#111"/></svg>
<div class="b" style="left:1044px;top:461px;width:125px;height:22.6px;background:#e6e6e6;border-radius:3px;"></div>
<div class="t" style="left:1054.40px;top:468.00px;font-size:11px;line-height:11px;color:#7d7d85;letter-spacing:-0.150px;">Přidat dle EAN</div>
<div class="b" style="left:1044px;top:494px;width:125px;height:22.6px;background:#e6e6e6;border-radius:3px;"></div>
<div class="t" style="left:1054.40px;top:501.00px;font-size:11px;line-height:11px;color:#7d7d85;letter-spacing:-0.150px;">Přidat dle dod.</div>
<div class="b" style="left:1044px;top:527px;width:125px;height:22.6px;background:#e6e6e6;border-radius:3px;"></div>
<div class="t" style="left:1054.40px;top:534.00px;font-size:11px;line-height:11px;color:#7d7d85;letter-spacing:-0.150px;">EDI</div>
<div class="b" style="left:1044px;top:560px;width:125px;height:22.6px;background:#e6e6e6;border-radius:3px;"></div>
<div class="t" style="left:1054.40px;top:567.00px;font-size:11px;line-height:11px;color:#7d7d85;letter-spacing:-0.150px;">Autom. vzkazy</div>
<svg class="b" style="left:1157.0px;top:569.4px" width="7" height="3.8" viewBox="0 0 7 3.8"><polygon points="0,0 7,0 3.5,3.8" fill="#7a7a7a"/></svg>
<div class="b" style="left:1044px;top:593px;width:125px;height:22.6px;background:#e6e6e6;border-radius:3px;"></div>
<div class="t" style="left:1054.40px;top:600.00px;font-size:11px;line-height:11px;color:#7d7d85;letter-spacing:-0.150px;">Aktivity</div>
<svg class="b" style="left:1157.0px;top:602.4px" width="7" height="3.8" viewBox="0 0 7 3.8"><polygon points="0,0 7,0 3.5,3.8" fill="#7a7a7a"/></svg>
<div class="b" style="left:1045px;top:626.4px;width:124px;height:22.6px;background:#d2e3f5;border-radius:3px;"></div>
<div class="t" style="left:1054.40px;top:633.00px;font-size:11px;line-height:11px;color:#000000;letter-spacing:-0.150px;">Přepočet</div>
<div class="b" style="left:1105px;top:661px;width:64px;height:15.4px;background:#d2e3f5;border-radius:2px;"></div>
<div class="t" style="left:1132.50px;top:663.00px;font-size:11px;line-height:11px;color:#000000;letter-spacing:-0.150px;">&gt;</div>
<div class="b" style="left:1044px;top:697px;width:125px;height:22.6px;background:#e6e6e6;border-radius:3px;"></div>
<div class="t" style="left:1054.40px;top:704.00px;font-size:11px;line-height:11px;color:#7d7d85;letter-spacing:-0.150px;">Aktualizace</div>
<div class="b" style="left:1043.2px;top:730px;width:14px;height:14px;background:#fff;border:1px solid #a9a9a9;border-radius:2px;"></div>
<div class="t" style="left:1059.70px;top:732.00px;font-size:11px;line-height:11px;color:#000000;letter-spacing:-0.150px;">Odesl. poštu</div>
<div class="b" style="left:1043.2px;top:755px;width:14px;height:14px;background:#fff;border:1px solid #a9a9a9;border-radius:2px;"></div>
<div class="t" style="left:1059.70px;top:757.00px;font-size:11px;line-height:11px;color:#000000;letter-spacing:-0.150px;">Polohovat</div>
<div class="b" style="left:1044px;top:780px;width:125px;height:23px;background:#d2e3f5;border:1px solid #1a6fd0;border-radius:2px;"></div>
<div class="t" style="left:1054.40px;top:787.00px;font-size:11px;line-height:11px;color:#000000;letter-spacing:-0.150px;">Uložit</div>
<div class="b" style="left:1045px;top:813px;width:124px;height:23px;background:#d2e3f5;border-radius:3px;"></div>
<div class="t" style="left:1054.40px;top:820.00px;font-size:11px;line-height:11px;color:#000000;letter-spacing:-0.150px;">Zrušit změny</div>
<div class="t" style="left:19.00px;top:842.00px;font-size:12px;line-height:12px;color:#333333;letter-spacing:-0.387px;">Jaroslav Novák</div>
<div class="t" style="left:269.30px;top:842.00px;font-size:12px;line-height:12px;color:#333333;letter-spacing:-0.550px;">Spojení: DEMODATA_JAVA_STABLE</div>
<div class="t" style="left:519.30px;top:842.00px;font-size:12px;line-height:12px;color:#333333;letter-spacing:-0.538px;">13.10.2022 (Renáta)</div>
<div class="t" style="left:669.50px;top:842.00px;font-size:12px;line-height:12px;color:#333333;letter-spacing:-0.348px;">Hotline: +420 296 397 330</div>
</body></html>
